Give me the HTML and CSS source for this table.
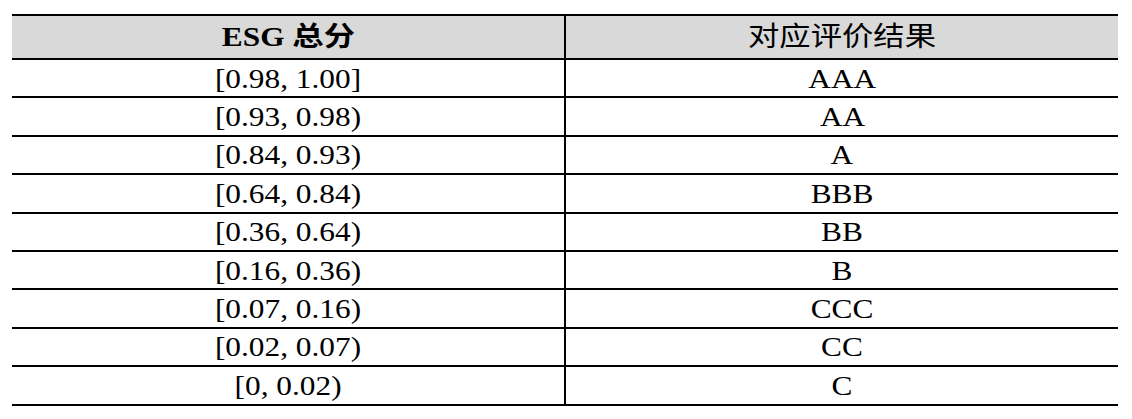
FILE: index.html
```html
<!DOCTYPE html>
<html lang="zh">
<head>
<meta charset="utf-8">
<link rel="stylesheet" href="styles.css">
</head>
<body>
<div class="table">
  <div class="row head">
    <div class="cell left"><span class="t bold">ESG 总分</span></div>
    <div class="cell"><span class="t">对应评价结果</span></div>
  </div>
  <div class="row"><div class="cell left"><span class="t">[0.98, 1.00]</span></div><div class="cell"><span class="t">AAA</span></div></div>
  <div class="row"><div class="cell left"><span class="t">[0.93, 0.98)</span></div><div class="cell"><span class="t">AA</span></div></div>
  <div class="row"><div class="cell left"><span class="t">[0.84, 0.93)</span></div><div class="cell"><span class="t">A</span></div></div>
  <div class="row"><div class="cell left"><span class="t">[0.64, 0.84)</span></div><div class="cell"><span class="t">BBB</span></div></div>
  <div class="row"><div class="cell left"><span class="t">[0.36, 0.64)</span></div><div class="cell"><span class="t">BB</span></div></div>
  <div class="row"><div class="cell left"><span class="t">[0.16, 0.36)</span></div><div class="cell"><span class="t">B</span></div></div>
  <div class="row"><div class="cell left"><span class="t">[0.07, 0.16)</span></div><div class="cell"><span class="t">CCC</span></div></div>
  <div class="row"><div class="cell left"><span class="t">[0.02, 0.07)</span></div><div class="cell"><span class="t">CC</span></div></div>
  <div class="row"><div class="cell left"><span class="t">[0, 0.02)</span></div><div class="cell"><span class="t">C</span></div></div>
</div>
</body>
</html>
```
FILE: styles.css
```css
html, body {
  margin: 0;
  padding: 0;
  background: #ffffff;
}
body {
  padding: 14px 0 0 12px;
  font-family: "Liberation Serif", "Noto Sans CJK SC", serif;
  font-size: 27px;
  color: #000;
}
.table {
  width: 1106px;
  border-top: 2px solid #000;
}
.row {
  display: grid;
  grid-template-columns: 554px 552px;
  height: 38.4px;
  box-sizing: border-box;
  border-bottom: 2px solid #000;
}
.row.head {
  height: 44px;
  background: #d9d9d9;
}
.cell {
  display: flex;
  align-items: center;
  justify-content: center;
  box-sizing: border-box;
  line-height: 1;
  padding-top: 2px;
}
.head .cell {
  padding-top: 1px;
}
.cell.left {
  border-right: 2px solid #000;
}
.t {
  display: inline-block;
  transform: scaleX(1.16);
  white-space: nowrap;
}
.bold {
  font-weight: bold;
}
```
